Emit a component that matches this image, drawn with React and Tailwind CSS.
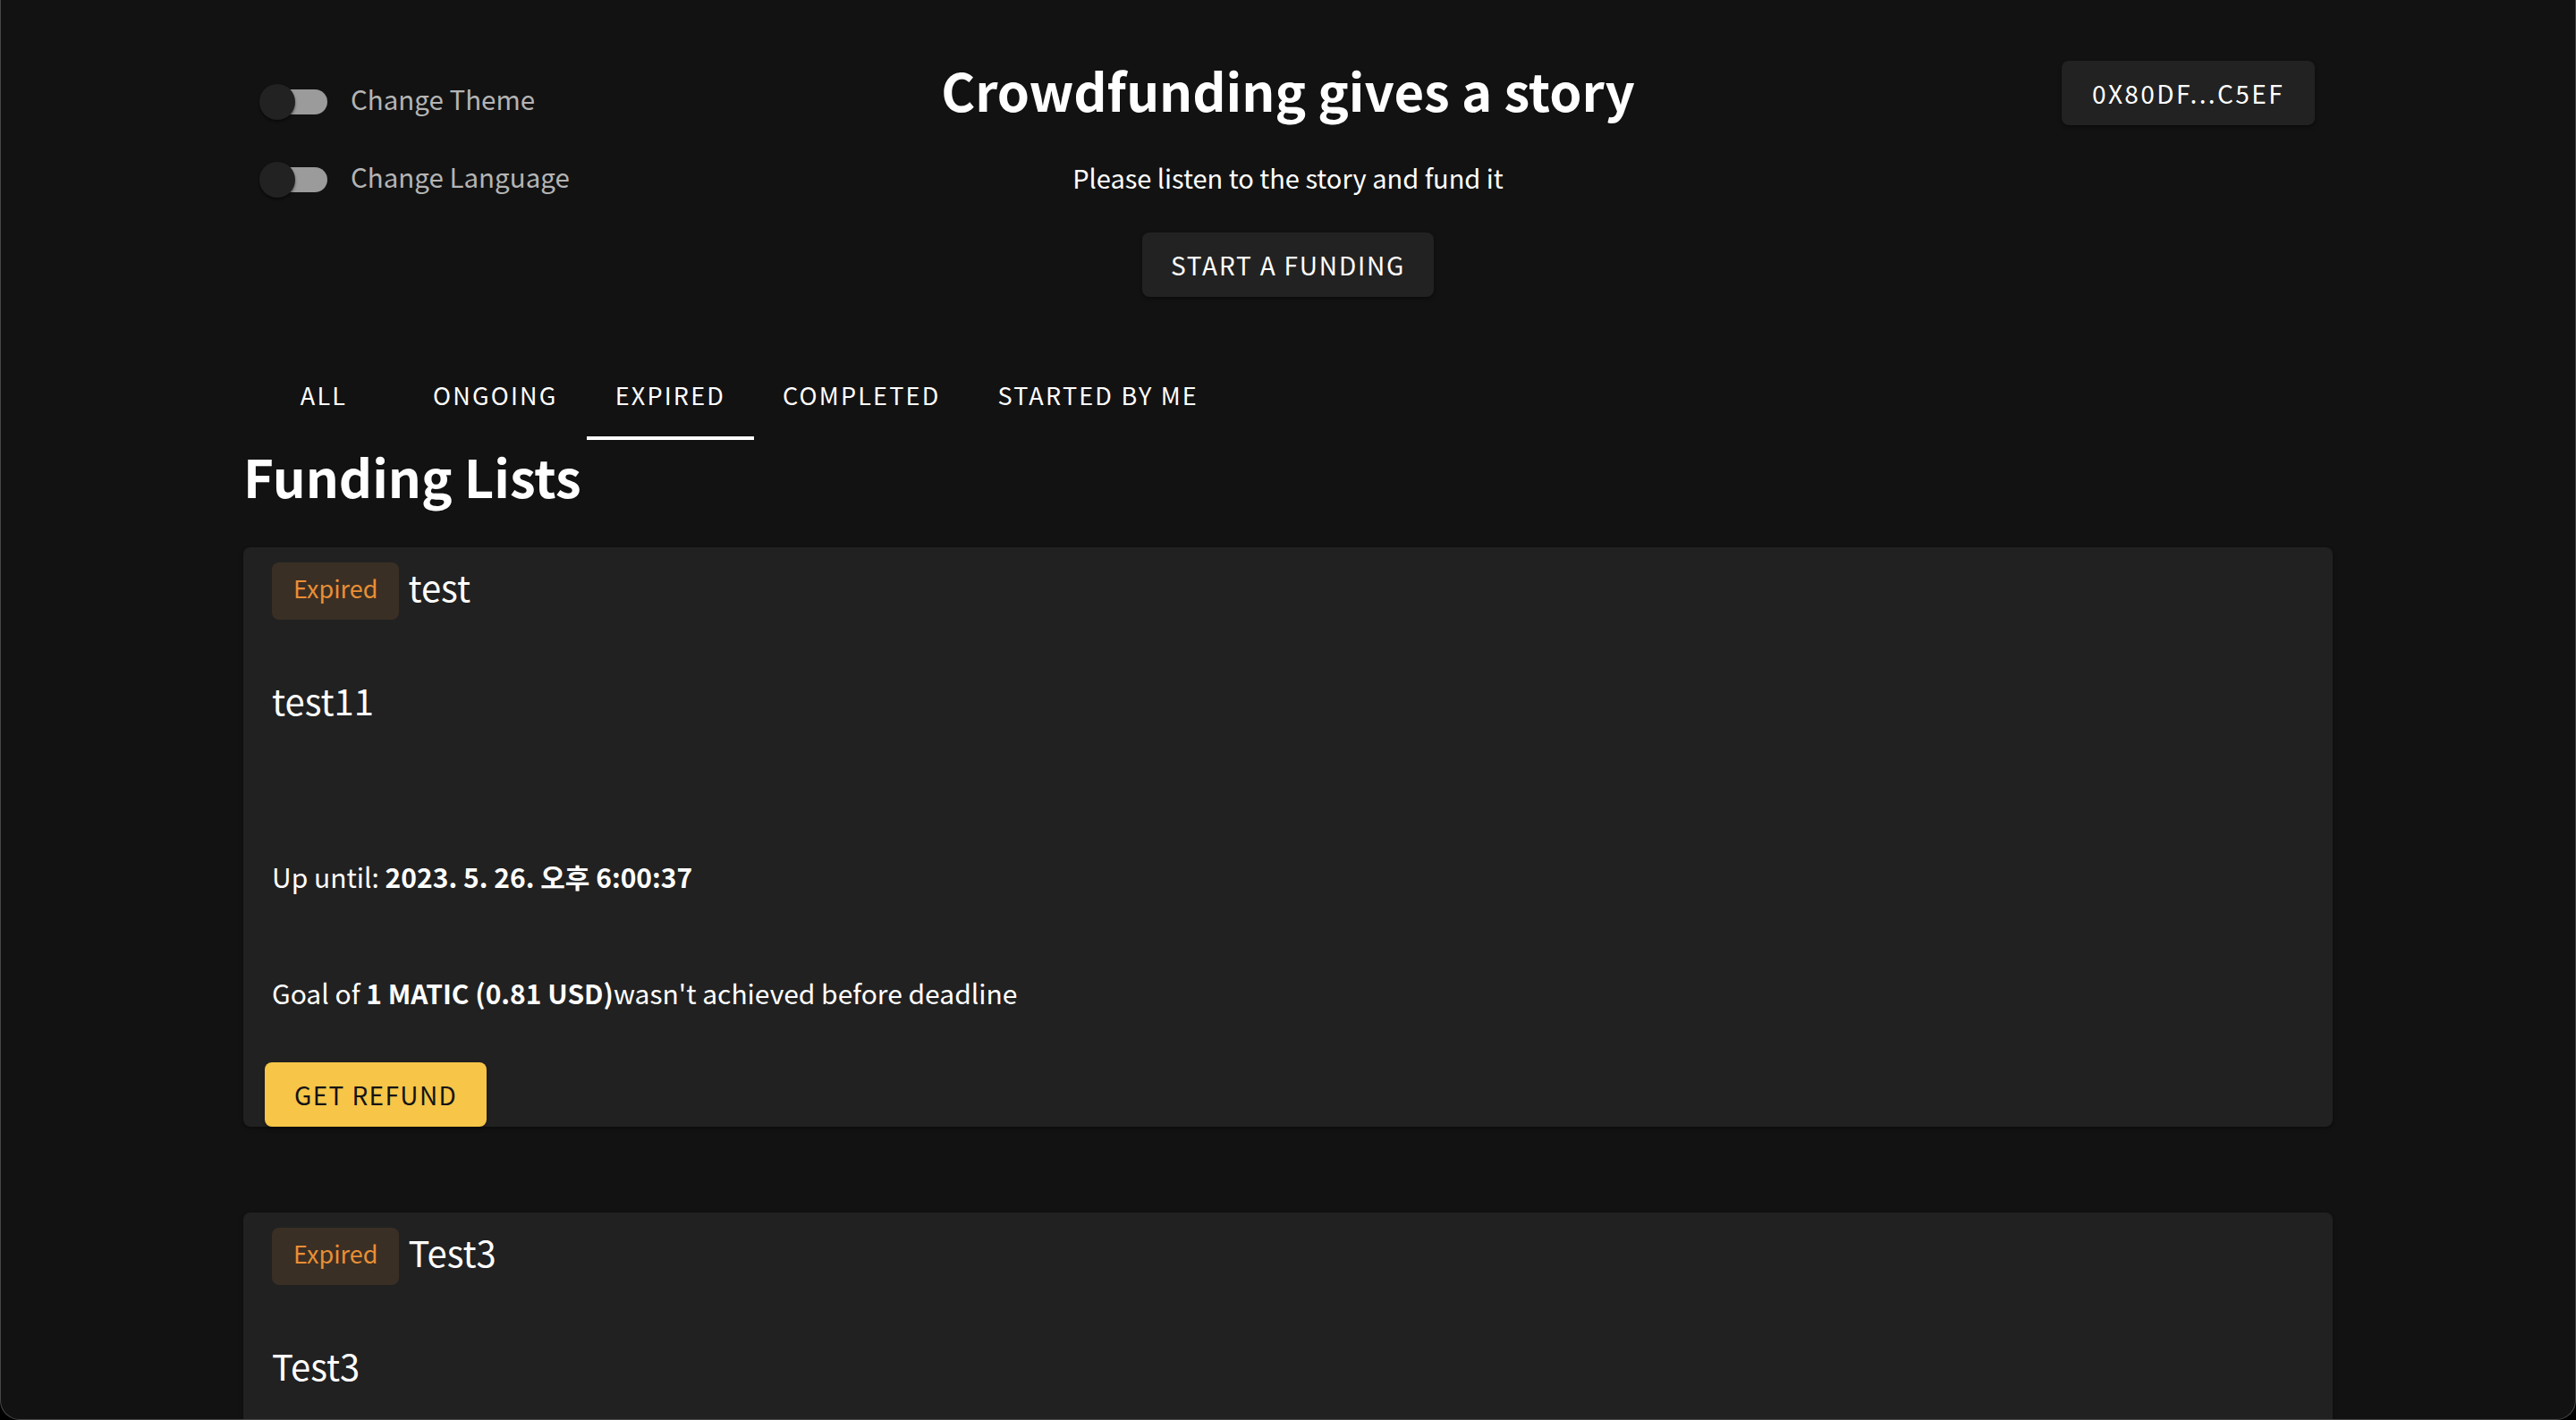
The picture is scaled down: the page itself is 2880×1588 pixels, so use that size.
import React from 'react'

const FONT = { fontFamily: '"Noto Sans CJK KR", "Noto Sans", sans-serif' }

const TABS = ['All', 'Ongoing', 'Expired', 'Completed', 'Started by me']

const FUNDINGS = [
    {
        title: 'test',
        story: 'test11',
        until: '2023. 5. 26. 오후 6:00:37',
        goal: '1 MATIC (0.81 USD)',
    },
    {
        title: 'Test3',
        story: 'Test3',
        until: '2023. 5. 27. 오후 2:10:05',
        goal: '3 MATIC (2.43 USD)',
    },
]

const Toggle = ({ label }) => (
    <div className="flex items-center h-[76px]">
        <div className="w-[120px] h-[76px] flex items-center pl-[26px]">
            <div className="relative w-[68px] h-[28px] rounded-full bg-[#9b9b9b]">
                <span className="absolute -left-[8px] top-1/2 -translate-y-1/2 w-10 h-10 rounded-full bg-[#222222] shadow-[0_2px_3px_rgba(0,0,0,0.5)]" />
            </div>
        </div>
        <span className="text-[29.5px] text-[#b4b4b4] leading-none pb-[7px]">{label}</span>
    </div>
)

const FundingCard = ({ item }) => (
    <div className="bg-[#212121] rounded-lg shadow-[0_2px_4px_rgba(0,0,0,0.35)] mb-24">
        <div className="flex items-center pt-[17px] pl-8">
            <span className="h-16 px-[24px] rounded-lg bg-[#3a2f24] text-[#e88f36] text-[27px] flex items-center pb-[6px]">
                Expired
            </span>
            <span className="ml-[10px] text-[40px] text-white leading-none mb-[10px]">{item.title}</span>
        </div>
        <div className="px-8">
            <p className="mt-[60px] text-[40px] leading-[60px] text-white">{item.story}</p>
            <p className="mt-[143px] text-[30px] leading-[48px] text-white">
                Up until: <span className="font-bold">{item.until}</span>
            </p>
            <p className="mt-[82px] text-[30px] leading-[48px] text-white">
                Goal of <span className="font-bold">{item.goal}</span>wasn't achieved before deadline
            </p>
            <button className="mt-[54px] -ml-2 h-[72px] px-[33px] rounded-lg bg-[#f7c548] text-[#141414] text-[28px] tracking-[1.4px] uppercase shadow-[0_2px_4px_rgba(0,0,0,0.3)]">
                Get refund
            </button>
        </div>
    </div>
)

export default function App() {
    return (
        <div className="bg-black" style={FONT}>
            <div className="h-[1588px] overflow-hidden bg-[#121212] border-x border-b border-[#474747] rounded-b-[22px]">
                <div className="w-[2336px] mx-auto">
                    {/* header */}
                    <div className="grid grid-cols-[1fr_auto_1fr]">
                        <div className="pt-[76px] flex flex-col gap-[11px]">
                            <Toggle label="Change Theme" />
                            <Toggle label="Change Language" />
                        </div>
                        <div className="flex flex-col items-center">
                            <h1 className="mt-[58px] text-[58px] leading-[84px] font-bold text-white">Crowdfunding gives a story</h1>
                            <p className="mt-[32px] text-[29px] leading-[48px] text-white">Please listen to the story and fund it</p>
                            <button className="mt-[38px] h-[72px] px-8 rounded-lg bg-[#222222] text-white text-[28px] tracking-[1.8px] uppercase shadow-[0_2px_4px_rgba(0,0,0,0.4)]">
                                Start a funding
                            </button>
                        </div>
                        <div className="flex justify-end items-start pr-5">
                            <button className="mt-[68px] h-[72px] px-[34px] rounded-lg bg-[#222222] text-white text-[28px] tracking-[2.4px] shadow-[0_2px_4px_rgba(0,0,0,0.4)]">
                                0X80DF...C5EF
                            </button>
                        </div>
                    </div>

                    {/* tabs */}
                    <div className="mt-[64px] flex">
                        {TABS.map((t) => (
                            <div key={t} className="relative min-w-[180px] h-[96px] px-8 pb-1 flex items-center justify-center text-[27px] tracking-[2.2px] uppercase text-white">
                                {t}
                                {t === 'Expired' && <span className="absolute inset-x-0 bottom-0 h-1 bg-white" />}
                            </div>
                        ))}
                    </div>

                    <h2 className="mt-[6px] text-[58px] leading-[68px] font-bold text-white">Funding Lists</h2>

                    <div className="mt-[46px]">
                        {FUNDINGS.map((f) => (
                            <FundingCard key={f.title} item={f} />
                        ))}
                    </div>
                </div>
            </div>
        </div>
    )
}
